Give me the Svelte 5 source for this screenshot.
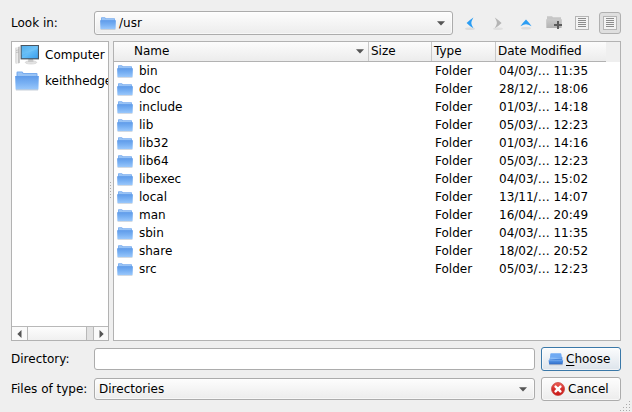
<script>
  const rows = [
    ['bin', '04/03/… 11:35'],
    ['doc', '28/12/… 18:06'],
    ['include', '01/03/… 14:18'],
    ['lib', '05/03/… 12:23'],
    ['lib32', '01/03/… 14:16'],
    ['lib64', '05/03/… 12:23'],
    ['libexec', '04/03/… 15:02'],
    ['local', '13/11/… 14:07'],
    ['man', '16/04/… 20:49'],
    ['sbin', '04/03/… 11:35'],
    ['share', '18/02/… 20:52'],
    ['src', '05/03/… 12:23']
  ];
  const gripDots = [[9, 0], [6, 3], [9, 3], [3, 6], [6, 6], [9, 6], [0, 9], [3, 9], [6, 9], [9, 9]];
</script>

<svelte:head><title>Choose directory</title></svelte:head>

<svg width="0" height="0" class="defs" aria-hidden="true">
  <defs>
    <linearGradient id="fold" x1="0" y1="0" x2="0" y2="1">
      <stop offset="0" stop-color="#5f9be9" /><stop offset=".5" stop-color="#78b0f3" /><stop offset="1" stop-color="#9ac8fb" />
    </linearGradient>
    <linearGradient id="screen" x1="0" y1="0" x2="1" y2="1">
      <stop offset="0" stop-color="#38a0e8" /><stop offset=".5" stop-color="#64bdf8" /><stop offset="1" stop-color="#399fee" />
    </linearGradient>
    <linearGradient id="grey" x1="0" y1="0" x2="0" y2="1">
      <stop offset="0" stop-color="#cacaca" /><stop offset="1" stop-color="#b2b2b2" />
    </linearGradient>
    <linearGradient id="metal" x1="0" y1="0" x2="1" y2="0">
      <stop offset="0" stop-color="#cfcfcf" /><stop offset=".5" stop-color="#efefef" /><stop offset="1" stop-color="#999" />
    </linearGradient>
    <linearGradient id="red" x1="0" y1="0" x2="0" y2="1">
      <stop offset="0" stop-color="#ee6259" /><stop offset=".5" stop-color="#d52f2c" /><stop offset="1" stop-color="#cb1a17" />
    </linearGradient>
    <linearGradient id="drawer" x1="0" y1="0" x2="0" y2="1">
      <stop offset="0" stop-color="#589bed" /><stop offset="1" stop-color="#2f6bc4" />
    </linearGradient>
  </defs>
</svg>

{#snippet folder(w, h)}
  <svg class="ico" width={w} height={h} viewBox="0 0 16 13" preserveAspectRatio="none">
    <path d="M1 4V1.1Q1 .3 1.7.3H4.7Q5.4.3 5.6 1.3H14.4Q15 1.3 15 2V5H1z" fill="#78acef" />
    <path d="M1.8 1H4.7L5.2 2H14.3V3.2H1.8z" fill="#98c3f5" />
    <path d="M.1 3.3H15.9L15.6 12.1H.4z" fill="url(#fold)" />
    <path d="M.6 12H15.4V12.6H.6z" fill="#8799b0" opacity=".6" />
  </svg>
{/snippet}

{#snippet listIcon()}
  <svg width="14" height="14" viewBox="0 0 14 14" shape-rendering="crispEdges">
    <path d="M.5.5H13.5V13.5H.5z" fill="#f3f3f3" stroke="#b5b5b5" />
    <path d="M3 2.5H11M3 4.5H11M3 6.5H11M3 8.5H11M3 10.5H11" stroke="#8c8c8c" />
  </svg>
{/snippet}

{#snippet down()}
  <svg class="down" width="8" height="5" viewBox="0 0 8 5"><path d="M0 .2H8L4 4.4z" fill="#555" /></svg>
{/snippet}

<div class="dialog">
  <div class="top">
    <span class="label">Look in:</span>
    <div class="combo look">{@render folder(16, 13)}<span>/usr</span>{@render down()}</div>
    <div class="tools">
      <div class="tool"><svg width="16" height="16" viewBox="0 0 16 16"><ellipse cx="8" cy="13.8" rx="5" ry="1.2" fill="#dcdcdc" /><path d="M11.4 2.4Q8 4.6 4.6 8Q8 11.4 11.4 13.3Q9.4 10 9.3 8Q9.4 5.8 11.4 2.4z" fill="#2b9df3" /></svg></div>
      <div class="tool"><svg width="16" height="16" viewBox="0 0 16 16"><ellipse cx="8" cy="13.8" rx="5" ry="1.2" fill="#e0e0e0" /><path d="M4.8 2.4Q8.2 4.6 11.6 8Q8.2 11.4 4.8 13.3Q6.8 10 6.9 8Q6.8 5.8 4.8 2.4z" fill="#b5b5b5" /></svg></div>
      <div class="tool"><svg width="16" height="16" viewBox="0 0 16 16"><ellipse cx="8" cy="13.3" rx="5" ry="1.2" fill="#dcdcdc" /><path d="M2.4 11.2Q4.6 8 8 4.5Q11.4 8 13.6 11.2Q10 9.2 8 9.2Q6 9.2 2.4 11.2z" fill="#2b9df3" /></svg></div>
      <div class="tool"><svg width="16" height="16" viewBox="0 0 16 16"><path d="M1 4V1.2H6L7 2.3H15V6H1z" fill="#c6c6c6" /><path d="M.1 4.3H15.9L15.6 13H.4z" fill="url(#grey)" /><path d="M8 10H16M12 6V14" stroke="#5c5c5c" stroke-width="2" /></svg></div>
      <div class="tool">{@render listIcon()}</div>
      <div class="tool on">{@render listIcon()}</div>
    </div>
  </div>

  <div class="middle">
    <div class="panel side">
      <div class="places">
        <div class="place">
          <svg class="ico" width="24" height="22" viewBox="0 0 24 22">
            <path d="M.3 3.8L4.5 2.6V19L1.2 20Q.3 19.5 .3 18z" fill="url(#metal)" />
            <path d="M1 6.5L4 5.8M1 8.5L4 8" stroke="#aaa" stroke-width=".6" />
            <ellipse cx="16" cy="18.4" rx="5.7" ry="1.7" fill="#e2e2e2" stroke="#bcbcbc" stroke-width=".4" />
            <path d="M13.5 14H18L18.5 18H13z" fill="#c9c9c9" />
            <path d="M5.6 1H24V15.4H5.6z" fill="#4a5560" />
            <path d="M6.7 2H22.9V14.2H6.7z" fill="url(#screen)" />
            <path d="M6.7 2H22.9V5L6.7 11z" fill="#8bd1fa" opacity=".3" />
          </svg>
          <span>Computer</span>
        </div>
        <div class="place">{@render folder(24, 20)}<span>keithhedger</span></div>
      </div>
      <div class="scroll">
        <div class="arrow"><svg width="5" height="8" viewBox="0 0 5 8"><path d="M4.5 0V8L.3 4z" fill="#555" /></svg></div>
        <div class="thumb"></div>
        <div class="arrow right"><svg width="5" height="8" viewBox="0 0 5 8"><path d="M.5 0V8L4.7 4z" fill="#555" /></svg></div>
      </div>
    </div>
    <div class="splitter"><svg width="3" height="18" shape-rendering="crispEdges">{#each [0, 3, 6, 9, 12, 15] as y}<rect x="1" {y} width="1" height="1" fill="#aaa" />{/each}</svg></div>
    <div class="panel files">
      <div class="headwrap">
        <div class="header">
          <div class="name"><span>Name</span>{@render down()}</div><div>Size</div><div>Type</div><div class="date">Date Modified</div>
        </div>
      </div>
      {#each rows as [name, date]}
        <div class="row">
          <div class="cell">{@render folder(16, 13)}<span>{name}</span></div><div></div><div class="type">Folder</div><div class="when">{date}</div>
        </div>
      {/each}
    </div>
  </div>

  <div class="bottom first">
    <span class="label">Directory:</span>
    <div class="input"></div>
    <div class="button primary">
      <svg width="16" height="14" viewBox="0 0 16 14">
        <path d="M2.3 2Q2.3 1.2 3.2 1.2H12.4Q13.3 1.2 13.3 2L14.3 7.5H1.8z" fill="#6faaf3" />
        <path d="M1.8 6.3L14.3 5V8.6H1.3z" fill="#4a88dd" />
        <path d="M2.2 5.4H13.8V6.5L2 7.6z" fill="#8abcf7" />
        <path d="M.5 8.2H15.2L14.5 12.4H1.2z" fill="url(#drawer)" />
        <path d="M1.5 12.8H14.5" stroke="#aaa" stroke-width=".5" />
      </svg>
      <span><u>C</u>hoose</span>
    </div>
  </div>
  <div class="bottom second">
    <span class="label">Files of type:</span>
    <div class="combo type-combo"><span>Directories</span>{@render down()}</div>
    <div class="button cancel">
      <svg width="14" height="14" viewBox="0 0 14 14"><circle cx="7" cy="7" r="6.5" fill="url(#red)" stroke="#c43a35" stroke-width=".7" /><path d="M4.6 4.6L9.4 9.4M9.4 4.6L4.6 9.4" stroke="#fff" stroke-width="2.5" stroke-linecap="round" /></svg>
      <span>Cancel</span>
    </div>
  </div>
  <svg class="grip" width="10" height="10" shape-rendering="crispEdges">{#each gripDots as [x, y]}<rect {x} {y} width="1" height="1" fill="#aaa" />{/each}</svg>
</div>

<style>
  :global(body) { margin: 0; overflow: hidden; }
  .defs { position: absolute; }
  svg { flex: none; display: block; }
  .dialog { position: relative; box-sizing: border-box; width: 632px; height: 412px; padding: 11px 11px 0; background: #efefef; color: #000; font: 12px/18px "DejaVu Sans", sans-serif; white-space: nowrap; display: flex; flex-direction: column; }
  .dialog div { box-sizing: border-box; }
  .label { width: 83px; flex: none; }
  .top { display: flex; align-items: center; height: 24px; flex: none; }
  .combo, .button { display: flex; align-items: center; border: 1px solid #acacac; border-radius: 3px; background: linear-gradient(#fdfdfd, #ececec); box-shadow: inset 0 0 0 1px #ffffff90; }
  .combo .down { margin-left: auto; }
  .look { width: 359px; height: 24px; padding: 0 7px 0 5px; gap: 3px; }
  .tools { display: flex; margin-left: 6px; gap: 6px; }
  .tool { width: 22px; height: 22px; display: flex; align-items: center; justify-content: center; }
  .on { border: 1px solid #b0b0b0; border-radius: 3px; background: #dfdfdf; }
  .middle { display: flex; height: 300px; margin-top: 6px; flex: none; }
  .panel { background: #fff; border: 1px solid #b2b2b2; overflow: hidden; }
  .side { width: 98px; display: flex; flex-direction: column; }
  .places { flex: 1; }
  .place { height: 26px; display: flex; align-items: center; gap: 6px; padding-left: 3px; }
  .scroll { height: 14px; display: flex; background: #e2e2e2; border-top: 1px solid #b8b8b8; }
  .arrow { width: 15px; display: flex; align-items: center; justify-content: center; background: #fafafa; }
  .right { margin-left: auto; border-left: 1px solid #b8b8b8; }
  .thumb { width: 60px; border: solid #b8b8b8; border-width: 0 1px; background: linear-gradient(#fdfdfd, #f0f0f0); }
  .splitter { width: 4px; display: flex; align-items: center; }
  .files { width: 508px; }
  .headwrap { height: 20px; background: #efefef; }
  .header, .row { display: grid; grid-template-columns: 255px 63px 64px 110px; }
  .header { width: 492px; height: 20px; border-bottom: 1px solid #b2b2b2; background: linear-gradient(#fcfcfc, #ececec); line-height: 18px; }
  .header > div { padding-left: 2px; border-right: 1px solid #c8c8c8; }
  .header > .name { display: flex; align-items: flex-start; justify-content: space-between; padding: 0 4px 0 20px; }
  .name .down { margin-top: 7px; }
  .header > .date { border: 0; }
  .row { height: 18px; }
  .cell { display: flex; align-items: center; gap: 6px; padding-left: 3px; }
  .type, .when { padding-left: 3px; }
  .bottom { display: flex; align-items: center; height: 24px; flex: none; }
  .first, .second { margin-top: 6px; }
  .input { width: 441px; height: 22px; border: 1px solid #acacac; border-radius: 3px; background: #fff; }
  .button { width: 80px; height: 24px; margin-left: 6px; padding-left: 6px; gap: 2px; }
  .button u { text-underline-offset: 2px; text-decoration-thickness: 1px; }
  .primary { border-color: #3a78a8; background: linear-gradient(#fbfcfd, #dde4eb); }
  .cancel { padding-left: 9px; gap: 3px; }
  .type-combo { width: 441px; height: 22px; padding: 0 7px 0 4px; }
  .grip { position: absolute; right: 2px; bottom: 1px; }
</style>
